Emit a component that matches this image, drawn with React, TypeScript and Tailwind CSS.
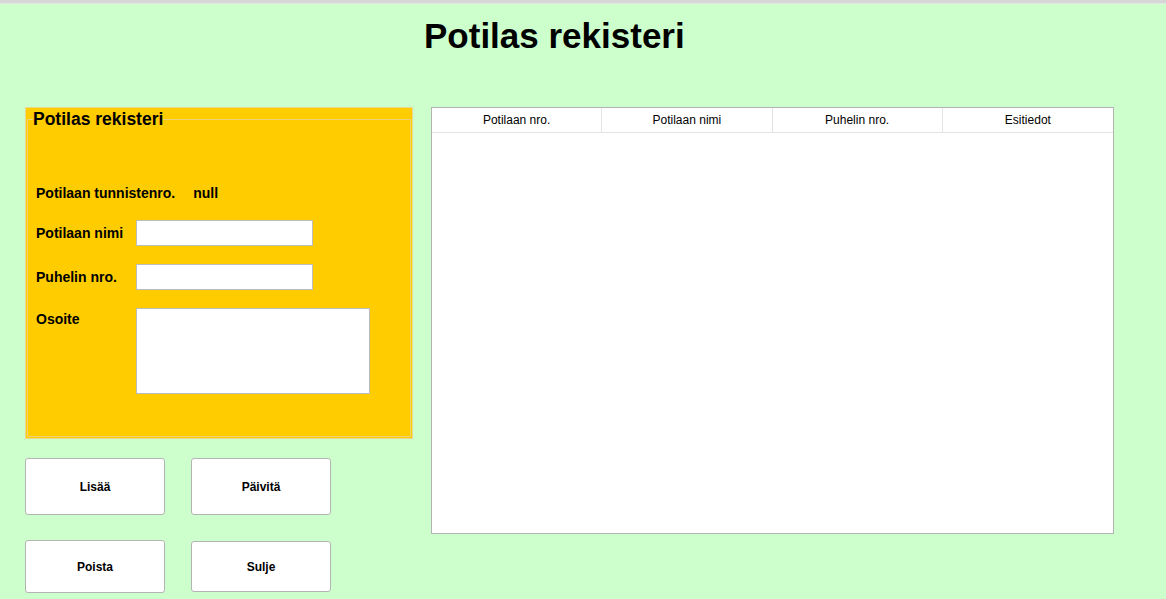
import React from "react"

const columns = ["Potilaan nro.", "Potilaan nimi", "Puhelin nro.", "Esitiedot"]

function Button({ label, className }: { label: string; className?: string }) {
  return (
    <button
      className={`w-[140px] rounded-[3px] border border-[#b4b4b4] bg-white text-[12px] font-bold text-black ${className ?? ""}`}
    >
      {label}
    </button>
  )
}

export default function App() {
  return (
    <div className="min-h-[599px] w-full bg-[#ccffcc] font-['Liberation_Sans',Arial,sans-serif] text-black">
      <div className="h-[4px] bg-[#d6d6d6] border-b border-[#e6e6e6]" />

      <h1 className="mt-[12px] pl-[424px] text-[35px] font-bold leading-[40px]">Potilas rekisteri</h1>

      <div className="mt-[51px] flex gap-[18px] pl-[25px]">
        <div className="flex w-[388px] flex-col">
          <div className="h-[332px] border border-[#e9d98f] bg-[#ffcc00] p-[1px]">
            <fieldset className="h-full border border-[#eed27a] pl-[8px]">
              <legend className="-ml-[3px] text-[17.5px] font-bold leading-[21px]">Potilas rekisteri</legend>

              <div className="mt-[53px] flex items-center gap-[18px] text-[14px] font-bold leading-[20px]">
                <span>Potilaan tunnistenro.</span>
                <span>null</span>
              </div>

              <div className="mt-[17px] flex items-center text-[14px] font-bold leading-[20px]">
                <span className="w-[100px]">Potilaan nimi</span>
                <input className="h-[26px] w-[177px] border border-[#bdbdbd] bg-white outline-none" />
              </div>

              <div className="mt-[18px] flex items-center text-[14px] font-bold leading-[20px]">
                <span className="w-[100px]">Puhelin nro.</span>
                <input className="h-[26px] w-[177px] border border-[#bdbdbd] bg-white outline-none" />
              </div>

              <div className="mt-[18px] flex items-start text-[14px] font-bold leading-[20px]">
                <span className="mt-[1px] w-[100px]">Osoite</span>
                <textarea className="h-[86px] w-[234px] resize-none border border-[#bdbdbd] bg-white outline-none" />
              </div>
            </fieldset>
          </div>

          <div className="mt-[19px] flex gap-[26px]">
            <Button label="Lisää" className="h-[57px]" />
            <Button label="Päivitä" className="h-[57px]" />
          </div>
          <div className="mt-[25px] flex gap-[26px]">
            <Button label="Poista" className="h-[53px]" />
            <Button label="Sulje" className="h-[51px] mt-[1px]" />
          </div>
        </div>

        <div className="h-[427px] w-[683px] border border-[#b3b3b3] bg-white">
          <div className="grid h-[25px] grid-cols-4 border-b border-[#e3e3e3]">
            {columns.map((c, i) => (
              <div
                key={c}
                className={`flex items-center justify-center text-[12px] ${i < 3 ? "border-r border-[#e3e3e3]" : ""}`}
              >
                {c}
              </div>
            ))}
          </div>
        </div>
      </div>
    </div>
  )
}
